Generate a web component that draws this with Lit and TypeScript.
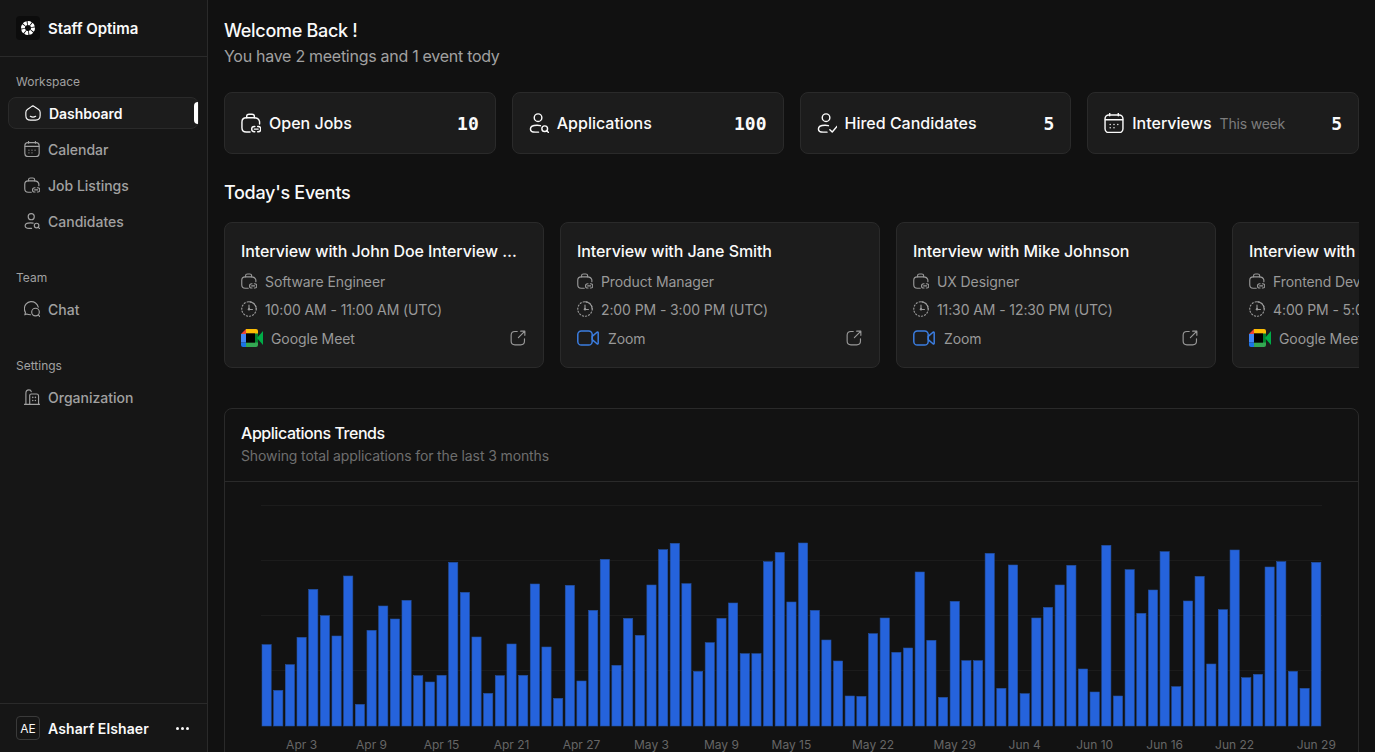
import { LitElement, html, css, svg } from "lit";
import { customElement } from "lit/decorators.js";

const ic = (body: unknown, size = 16) => html`<svg class="ic" width=${size} height=${size} viewBox="1.5 1.5 21 21" fill="none" stroke="currentColor" stroke-width="1.5" stroke-linecap="round" stroke-linejoin="round">${body}</svg>`;

const home = svg`<path d="M12 2.6 19.4 7.4Q21.4 8.8 21.4 11.2V15.4Q21.4 21.4 15.4 21.4H8.6Q2.6 21.4 2.6 15.4V11.2Q2.6 8.8 4.6 7.4L10 3.6Q11 2.9 12 2.6Z"/><path d="M8.5 16.4Q12 18.6 15.5 16.4"/>`;
const calendar = svg`<rect x="2.6" y="3.6" width="18.8" height="18.4" rx="4"/><path d="M3 8.6H21M7.5 2V4.5M16.5 2V4.5"/><path d="M8 13.5h.01M12 13.5h.01M16 13.5h.01M8 17h.01M12 17h.01"/>`;
const briefcase = svg`<path d="M11 21.5H7Q2.5 21.5 2.5 17V11Q2.5 6.5 7 6.5H15Q20 6.5 21 10.5V13"/><path d="M7.5 6.5V5Q7.5 2.8 10 2.8H13Q15.5 2.8 15.5 5V6.5"/><path d="M16 15.6H15.5A2.8 2.8 0 0 0 15.5 21.2H16M19 15.6H19.5A2.8 2.8 0 0 1 19.5 21.2H19M15.5 18.4H19.5"/>`;
const userSearch = svg`<circle cx="11" cy="6.4" r="4"/><path d="M11.5 21.6H8Q3 21.6 3 18.2Q3 14.4 10 14.4Q12 14.4 13.5 14.8"/><circle cx="18" cy="18" r="3"/><path d="M20.2 20.2 22 22"/>`;
const userCheck = svg`<circle cx="11" cy="6.4" r="4"/><path d="M12 21.6H8Q3 21.6 3 18.2Q3 14.4 10 14.4Q12 14.4 13.5 14.8"/><path d="M15 19 17.5 21.5 22.5 15.5"/>`;
const chat = svg`<path d="M10 19.5Q7 19.5 5 18.5L2.6 19.6 3.4 16.4Q2 14.4 2 11.5A9.2 9.2 0 0 1 20.2 9.6"/><circle cx="16.6" cy="16" r="5"/><path d="M20.4 19.6 22 21.8"/>`;
const building = svg`<path d="M2 21.6H22"/><path d="M4 21.6V7Q4 2.6 8 2.6Q10.6 2.6 11 5"/><path d="M9 21.6V9.6Q9 8 11 8H18Q20.6 8 20.6 10.6V21.6"/><path d="M13 12.5h.01M16.5 12.5h.01M13 16.5h.01M16.5 16.5h.01" stroke-width="2"/>`;
const clock = svg`<path d="M12 2.5A9.5 9.5 0 0 1 21.5 12" /><circle cx="12" cy="12" r="9.5" stroke-dasharray="1.6 2.6"/><path d="M12 7V12.6H16.5" /><circle cx="12" cy="12.4" r="1.6" fill="currentColor" stroke="none"/>`;
const external = svg`<path d="M11 3.5H8Q3 3.5 3 8.5V16Q3 21 8 21H15.5Q20.5 21 20.5 16V13"/><path d="M12.5 11.5 21 3M15.5 3H21V8.5"/>`;

const meet = html`<svg class="ic" width="22" height="18" viewBox="0 0 22 18"><path d="M0 5 5 0V5Z" fill="#ea4335"/><path d="M0 5H5V13.5H0Z" fill="#4285f4"/><path d="M0 13.5H5V18H2Q0 18 0 16Z" fill="#1a73e8"/><path d="M5 0H15Q17 0 17 2V6H14V4.5H5Z" fill="#fbbc04"/><path d="M5 13.5H14V12H17V16Q17 18 15 18H5Z" fill="#34a853"/><path d="M14 4.5H17V13.5H14Z" fill="#00832d"/><path d="M16 9 22 2V16Z" fill="#00ac47"/><rect x="5" y="4.5" width="9" height="9" fill="#000"/></svg>`;
const zoomIc = html`<svg class="ic zoom" width="22" height="16" viewBox="0 0 22 16" fill="none" stroke="#3b7de0" stroke-width="1.5" stroke-linejoin="round"><rect x=".8" y="1" width="14.4" height="14" rx="3.6"/><path d="M15.2 6.4 20 2.2Q21.2 1.6 21.2 3V13Q21.2 14.4 20 13.8L15.2 9.6Z"/></svg>`;
const logo = html`<svg width="24" height="24" viewBox="0 0 24 24"><g fill="#fff">${[0, 45, 90, 135, 180, 225, 270, 315].map((a) => svg`<path transform="rotate(${a} 12 12)" d="M11.6 5Q14 4.8 15.8 6.2L13.4 9.4Q12.6 8.8 11.8 8.9Z"/>`)}</g></svg>`;

const topsA = [434,571,494,412,268,347,408,228,613,391,318,357,301,527,546,526,187,277,411,580,527,432,526,252,441,595,256,543,331,178,496];
const topsB = [355,406,255,149,130,251,514,428,355,309,461,461,185,157,306,129,331,420,483,588,589,401,354,457,444,216,421,592,304,482,482,160,565,195];
const topsC = [581,354,322,255,196,507,576,136,588,209,340,270,155,560,303,229,492,329,150,533,523,201,185,514,565,187];
const heights = [...topsA, ...topsB, ...topsC].map((t) => (678 - t) / 3);
const ticks: [string, number][] = [["Apr 3",3],["Apr 9",9],["Apr 15",15],["Apr 21",21],["Apr 27",27],["May 3",33],["May 9",39],["May 15",45],["May 22",52],["May 29",59],["Jun 4",65],["Jun 10",71],["Jun 16",77],["Jun 22",83],["Jun 29",90]];

const X0 = 37; // first bar left, relative to the chart box
const PITCH = 11.663;
const BASE = 244; // bar baseline, relative to the chart box

const stats = [
  { icon: briefcase, label: "Open Jobs", value: "10" },
  { icon: userSearch, label: "Applications", value: "100" },
  { icon: userCheck, label: "Hired Candidates", value: "5" },
  { icon: calendar, label: "Interviews", sub: "This week", value: "5" },
];
const events = [
  { title: "Interview with John Doe Interview with John Doe", role: "Software Engineer", time: "10:00 AM - 11:00 AM (UTC)", meet: true },
  { title: "Interview with Jane Smith", role: "Product Manager", time: "2:00 PM - 3:00 PM (UTC)", meet: false },
  { title: "Interview with Mike Johnson", role: "UX Designer", time: "11:30 AM - 12:30 PM (UTC)", meet: false },
  { title: "Interview with Sarah Williams", role: "Frontend Developer", time: "4:00 PM - 5:00 PM (UTC)", meet: true },
];

@customElement("app-root")
export class AppRoot extends LitElement {
  static styles = css`
    :host { display: block; height: 100vh; overflow: hidden; background: #111111; color: #fafafa; font-family: Inter, "Liberation Sans", sans-serif; }
    * { box-sizing: border-box; }
    .ic { display: block; flex: none; }
    .layout { display: flex; height: 100%; }
    .side { width: 208px; flex: none; display: flex; flex-direction: column; background: #161616; border-right: 1px solid #2a2a2a; }
    .brand { height: 57px; flex: none; display: flex; align-items: center; gap: 8px; padding: 0 16px; border-bottom: 1px solid #2a2a2a; font-size: 15px; font-weight: 600; letter-spacing: -0.05px; }
    .logo { width: 24px; height: 24px; border-radius: 4px; background: #0c0c0c; }
    .groups { flex: 1; padding-top: 17px; display: flex; flex-direction: column; gap: 33px; }
    .group { display: flex; flex-direction: column; gap: 4px; padding: 0 8px; }
    .group-label { height: 16px; line-height: 16px; margin: 0 -8px 3px; padding: 0 16px; font-size: 12px; color: #a1a1a1; }
    .item { position: relative; height: 32px; display: flex; align-items: center; gap: 8px; padding: 0 16px; font-size: 14px; font-weight: 500; color: #a1a1a1; border-radius: 8px; }
    .item.active { color: #fafafa; font-weight: 600; letter-spacing: -0.05px; background: #1c1c1c; border: 1px solid #2a2a2a; width: 191px; }
    .item.active::after { content: ""; position: absolute; right: 0; top: 4px; bottom: 4px; width: 4px; background: #fff; border-radius: 4px 0 0 4px; }
    .foot { height: 49px; flex: none; border-top: 1px solid #2a2a2a; display: flex; align-items: center; gap: 8px; padding: 0 16px; font-size: 14px; font-weight: 600; letter-spacing: 0.1px; }
    .foot .name { flex: 1; }
    .avatar { width: 24px; height: 24px; border: 1px solid #3a3a3a; border-radius: 4px; display: flex; align-items: center; justify-content: center; font-size: 12px; font-weight: 400; }
    .dots { display: flex; gap: 2px; padding-right: 2px; }
    .dots i { width: 3px; height: 3px; border-radius: 50%; background: #fafafa; }
    .main { flex: 1; min-width: 0; padding: 17px 16px 16px; display: flex; flex-direction: column; overflow: hidden; }
    h1 { margin: 0; font-size: 18px; line-height: 27px; font-weight: 500; letter-spacing: -0.3px; }
    .sub { font-size: 16px; line-height: 24px; color: #a1a1a1; margin-bottom: 24px; letter-spacing: -0.28px; }
    .stats { display: grid; grid-template-columns: repeat(4, 1fr); gap: 16px; margin-bottom: 25px; }
    .stat { height: 62px; display: flex; align-items: center; gap: 8px; padding: 0 16px; background: #1c1c1c; border: 1px solid #2a2a2a; border-radius: 8px; font-size: 16px; font-weight: 500; }
    .stat .lab { flex: 1; display: flex; align-items: baseline; gap: 8px; }
    .stat small { font-size: 14px; font-weight: 400; color: #7c7c7c; letter-spacing: -0.2px; }
    .stat .val { font-family: "DejaVu Sans Mono", monospace; font-size: 18px; font-weight: 700; }
    h2 { margin: 0 0 15px; font-size: 18px; line-height: 28px; font-weight: 500; letter-spacing: -0.3px; }
    .events { display: flex; gap: 16px; overflow: hidden; flex: none; margin-bottom: 40px; }
    .ev { width: 320px; height: 146px; flex: none; padding: 16px; background: #1c1c1c; border: 1px solid #2a2a2a; border-radius: 8px; display: flex; flex-direction: column; }
    .ev-title { font-size: 16px; line-height: 24px; font-weight: 500; white-space: nowrap; overflow: hidden; text-overflow: ellipsis; margin-bottom: 8px; letter-spacing: -0.08px; }
    .row { display: flex; align-items: center; gap: 8px; height: 20px; font-size: 14px; color: #999999; white-space: nowrap; margin-bottom: 8px; letter-spacing: -0.1px; }
    .row.last { height: 22px; margin: 0; }
    .row.last .tool { flex: 1; }
    .row .zoom { margin-right: 1px; }
    .ext { color: #999999; margin-right: 1px; }
    .chart-card { flex: none; border: 1px solid #2a2a2a; border-radius: 8px; background: #121212; }
    .chart-head { height: 73px; padding: 14px 16px 0; border-bottom: 1px solid #2a2a2a; }
    .chart-title { font-size: 16px; line-height: 20px; font-weight: 500; letter-spacing: -0.45px; }
    .chart-sub { font-size: 14px; line-height: 20px; color: #6e6e6e; margin-top: 3px; letter-spacing: -0.12px; }
    .chart { display: block; }
    .grid { stroke: #1c1c1c; stroke-width: 1; }
    .bar { fill: #2563dc; stroke: #24509f; stroke-width: .6; }
    .tick { font-size: 12px; fill: #666666; text-anchor: middle; font-family: Inter, "Liberation Sans", sans-serif; }
  `;

  private item(icon: unknown, label: string, active = false) {
    return html`<div class="item ${active ? "active" : ""}">${ic(icon, 16)}<span>${label}</span></div>`;
  }

  render() {
    return html`<div class="layout">
      <aside class="side">
        <div class="brand"><div class="logo">${logo}</div><span>Staff Optima</span></div>
        <div class="groups">
          <div class="group">
            <div class="group-label">Workspace</div>
            ${this.item(home, "Dashboard", true)}
            ${this.item(calendar, "Calendar")}
            ${this.item(briefcase, "Job Listings")}
            ${this.item(userSearch, "Candidates")}
          </div>
          <div class="group">
            <div class="group-label">Team</div>
            ${this.item(chat, "Chat")}
          </div>
          <div class="group">
            <div class="group-label">Settings</div>
            ${this.item(building, "Organization")}
          </div>
        </div>
        <div class="foot"><div class="avatar">AE</div><span class="name">Asharf Elshaer</span><div class="dots"><i></i><i></i><i></i></div></div>
      </aside>
      <main class="main">
        <h1>Welcome Back !</h1>
        <div class="sub">You have 2 meetings and 1 event tody</div>
        <section class="stats">
          ${stats.map((s) => html`<div class="stat">${ic(s.icon, 20)}<div class="lab"><span>${s.label}</span>${s.sub ? html`<small>${s.sub}</small>` : ""}</div><span class="val">${s.value}</span></div>`)}
        </section>
        <h2>Today's Events</h2>
        <section class="events">
          ${events.map((e) => html`<article class="ev">
            <div class="ev-title">${e.title}</div>
            <div class="row">${ic(briefcase)}<span>${e.role}</span></div>
            <div class="row">${ic(clock)}<span>${e.time}</span></div>
            <div class="row last">${e.meet ? meet : zoomIc}<span class="tool">${e.meet ? "Google Meet" : "Zoom"}</span><span class="ext">${ic(external, 16)}</span></div>
          </article>`)}
        </section>
        <section class="chart-card">
          <div class="chart-head"><div class="chart-title">Applications Trends</div><div class="chart-sub">Showing total applications for the last 3 months</div></div>
          <svg class="chart" width="1133" height="280" viewBox="0 0 1133 280">
            ${[24, 79, 134, 189].map((y) => svg`<line class="grid" x1="36" x2="1097" y1=${y - 0.5} y2=${y - 0.5}></line>`)}
            ${heights.map((h, i) => svg`<rect class="bar" x=${X0 + PITCH * i} y=${BASE - h} width="9.2" height=${h}></rect>`)}
            ${ticks.map(([t, i]) => svg`<text class="tick" x=${X0 + PITCH * i + 4.6} y="267">${t}</text>`)}
          </svg>
        </section>
      </main>
    </div>`;
  }
}
